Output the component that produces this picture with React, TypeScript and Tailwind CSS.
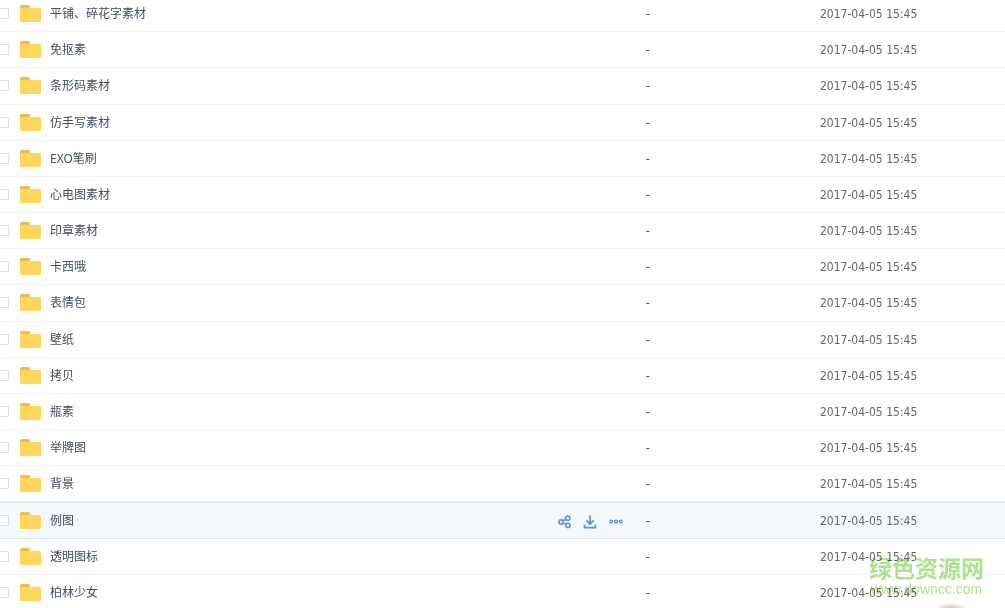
import React from "react";

const folders: { name: string; size: string; modified: string }[] = [
  { name: "平铺、碎花字素材", size: "-", modified: "2017-04-05 15:45" },
  { name: "免抠素", size: "-", modified: "2017-04-05 15:45" },
  { name: "条形码素材", size: "-", modified: "2017-04-05 15:45" },
  { name: "仿手写素材", size: "-", modified: "2017-04-05 15:45" },
  { name: "EXO笔刷", size: "-", modified: "2017-04-05 15:45" },
  { name: "心电图素材", size: "-", modified: "2017-04-05 15:45" },
  { name: "印章素材", size: "-", modified: "2017-04-05 15:45" },
  { name: "卡西哦", size: "-", modified: "2017-04-05 15:45" },
  { name: "表情包", size: "-", modified: "2017-04-05 15:45" },
  { name: "壁纸", size: "-", modified: "2017-04-05 15:45" },
  { name: "拷贝", size: "-", modified: "2017-04-05 15:45" },
  { name: "瓶素", size: "-", modified: "2017-04-05 15:45" },
  { name: "举牌图", size: "-", modified: "2017-04-05 15:45" },
  { name: "背景", size: "-", modified: "2017-04-05 15:45" },
  { name: "例图", size: "-", modified: "2017-04-05 15:45" },
  { name: "透明图标", size: "-", modified: "2017-04-05 15:45" },
  { name: "柏林少女", size: "-", modified: "2017-04-05 15:45" },
];

const activeFolder = "例图";

const FolderIcon = () => (
  <svg width="21" height="17" viewBox="0 0 21 17" className="shrink-0" aria-hidden="true">
    <path d="M0 5V1.500Q0 0 1.500 0H8.500Q10 0 10 1.500V5Z" fill="#e9bd55" />
    <rect y="3" width="21" height="14" rx="1.200" fill="#ffd65c" />
  </svg>
);

const ShareIcon = () => (
  <svg width="14" height="14" viewBox="0 0 14 14" fill="none" stroke="#5594de" strokeWidth="1.600">
    <circle cx="4" cy="7" r="2.100" />
    <circle cx="10.700" cy="3.200" r="2.100" />
    <circle cx="10.900" cy="10.400" r="2.100" />
    <path d="M5.800 5.900 8.900 4.200M5.900 7.900 9.100 9.500" />
  </svg>
);

const DownloadIcon = () => (
  <svg width="14" height="14" viewBox="0 0 14 14" fill="none" stroke="#5594de" strokeWidth="1.800">
    <path d="M7 .5V8.500M3.300 5.300 7 8.900 10.700 5.300M1.600 9.800V12.600H12.400V9.800" />
  </svg>
);

const MoreIcon = () => (
  <svg width="14" height="14" viewBox="0 0 14 14" fill="none" stroke="#5594de" strokeWidth="1.400">
    <circle cx="2.300" cy="6.500" r="1.400" />
    <circle cx="7" cy="6.500" r="1.400" />
    <circle cx="11.700" cy="6.500" r="1.400" />
  </svg>
);

// Share / download / more, shown on the active row
const RowActions = () => (
  <div className="flex items-center gap-3 pt-[3px]">
    <button type="button" aria-label="分享">
      <ShareIcon />
    </button>
    <button type="button" aria-label="下载">
      <DownloadIcon />
    </button>
    <button type="button" aria-label="更多">
      <MoreIcon />
    </button>
  </div>
);

const Watermark = () => (
  <div className="pointer-events-none absolute right-[21px] bottom-[11px] text-[#ade38f] mix-blend-multiply">
    <div className="text-[23px] leading-7 font-bold font-['Noto_Sans_CJK_SC',sans-serif]">绿色资源网</div>
    <div className="text-center text-sm leading-4 font-['Liberation_Sans',sans-serif]">www.downcc.com</div>
  </div>
);

const App = () => {
  return (
    <main className="relative h-screen overflow-hidden bg-white">
      {/* Folder list */}
      <table className="-mt-1 w-full table-fixed border-separate border-spacing-0 text-left font-['Noto_Sans','Noto_Sans_CJK_SC',sans-serif] text-xs text-[#424e67]">
        <colgroup>
          <col />
          <col className="w-[174px]" />
          <col className="w-[185px]" />
        </colgroup>
        <tbody>
          {folders.map((folder) => {
            const active = folder.name === activeFolder;
            const cell = active
              ? "border-y border-[#dbe7f5] bg-[#f5f9fe] p-0 align-top"
              : "border-b border-[#f2f6f8] p-0 align-top";
            return (
              <tr key={folder.name} className="h-9 nth-[6n+3]:h-[37px]">
                <td className={cell}>
                  <div className="flex h-[35px] items-center pr-[23px]">
                    <label className="flex min-w-0 flex-1 items-center">
                      <input
                        type="checkbox"
                        className="-ml-[3px] mr-[11px] h-[11px] w-3 shrink-0 appearance-none border border-[#dce1e8] bg-white"
                      />
                      <FolderIcon />
                      <span className="ml-[9px] truncate leading-5">{folder.name}</span>
                    </label>
                    {active && <RowActions />}
                  </div>
                </td>
                <td className={cell}>
                  <div className="flex h-[35px] items-center">{folder.size}</div>
                </td>
                <td className={cell}>
                  <div className="flex h-[35px] items-center font-['DejaVu_Sans_Condensed','DejaVu_Sans',sans-serif] text-[#666666]">
                    {folder.modified}
                  </div>
                </td>
              </tr>
            );
          })}
        </tbody>
      </table>

      {/* Top edge of the floating round button */}
      <div className="absolute right-[29px] -bottom-10 size-[50px] overflow-hidden">
        <div className="mt-[7px] ml-1 size-[42px] rounded-full bg-[#c9cacc] blur-[2px]" />
      </div>

      <Watermark />
    </main>
  );
};

export default App;
